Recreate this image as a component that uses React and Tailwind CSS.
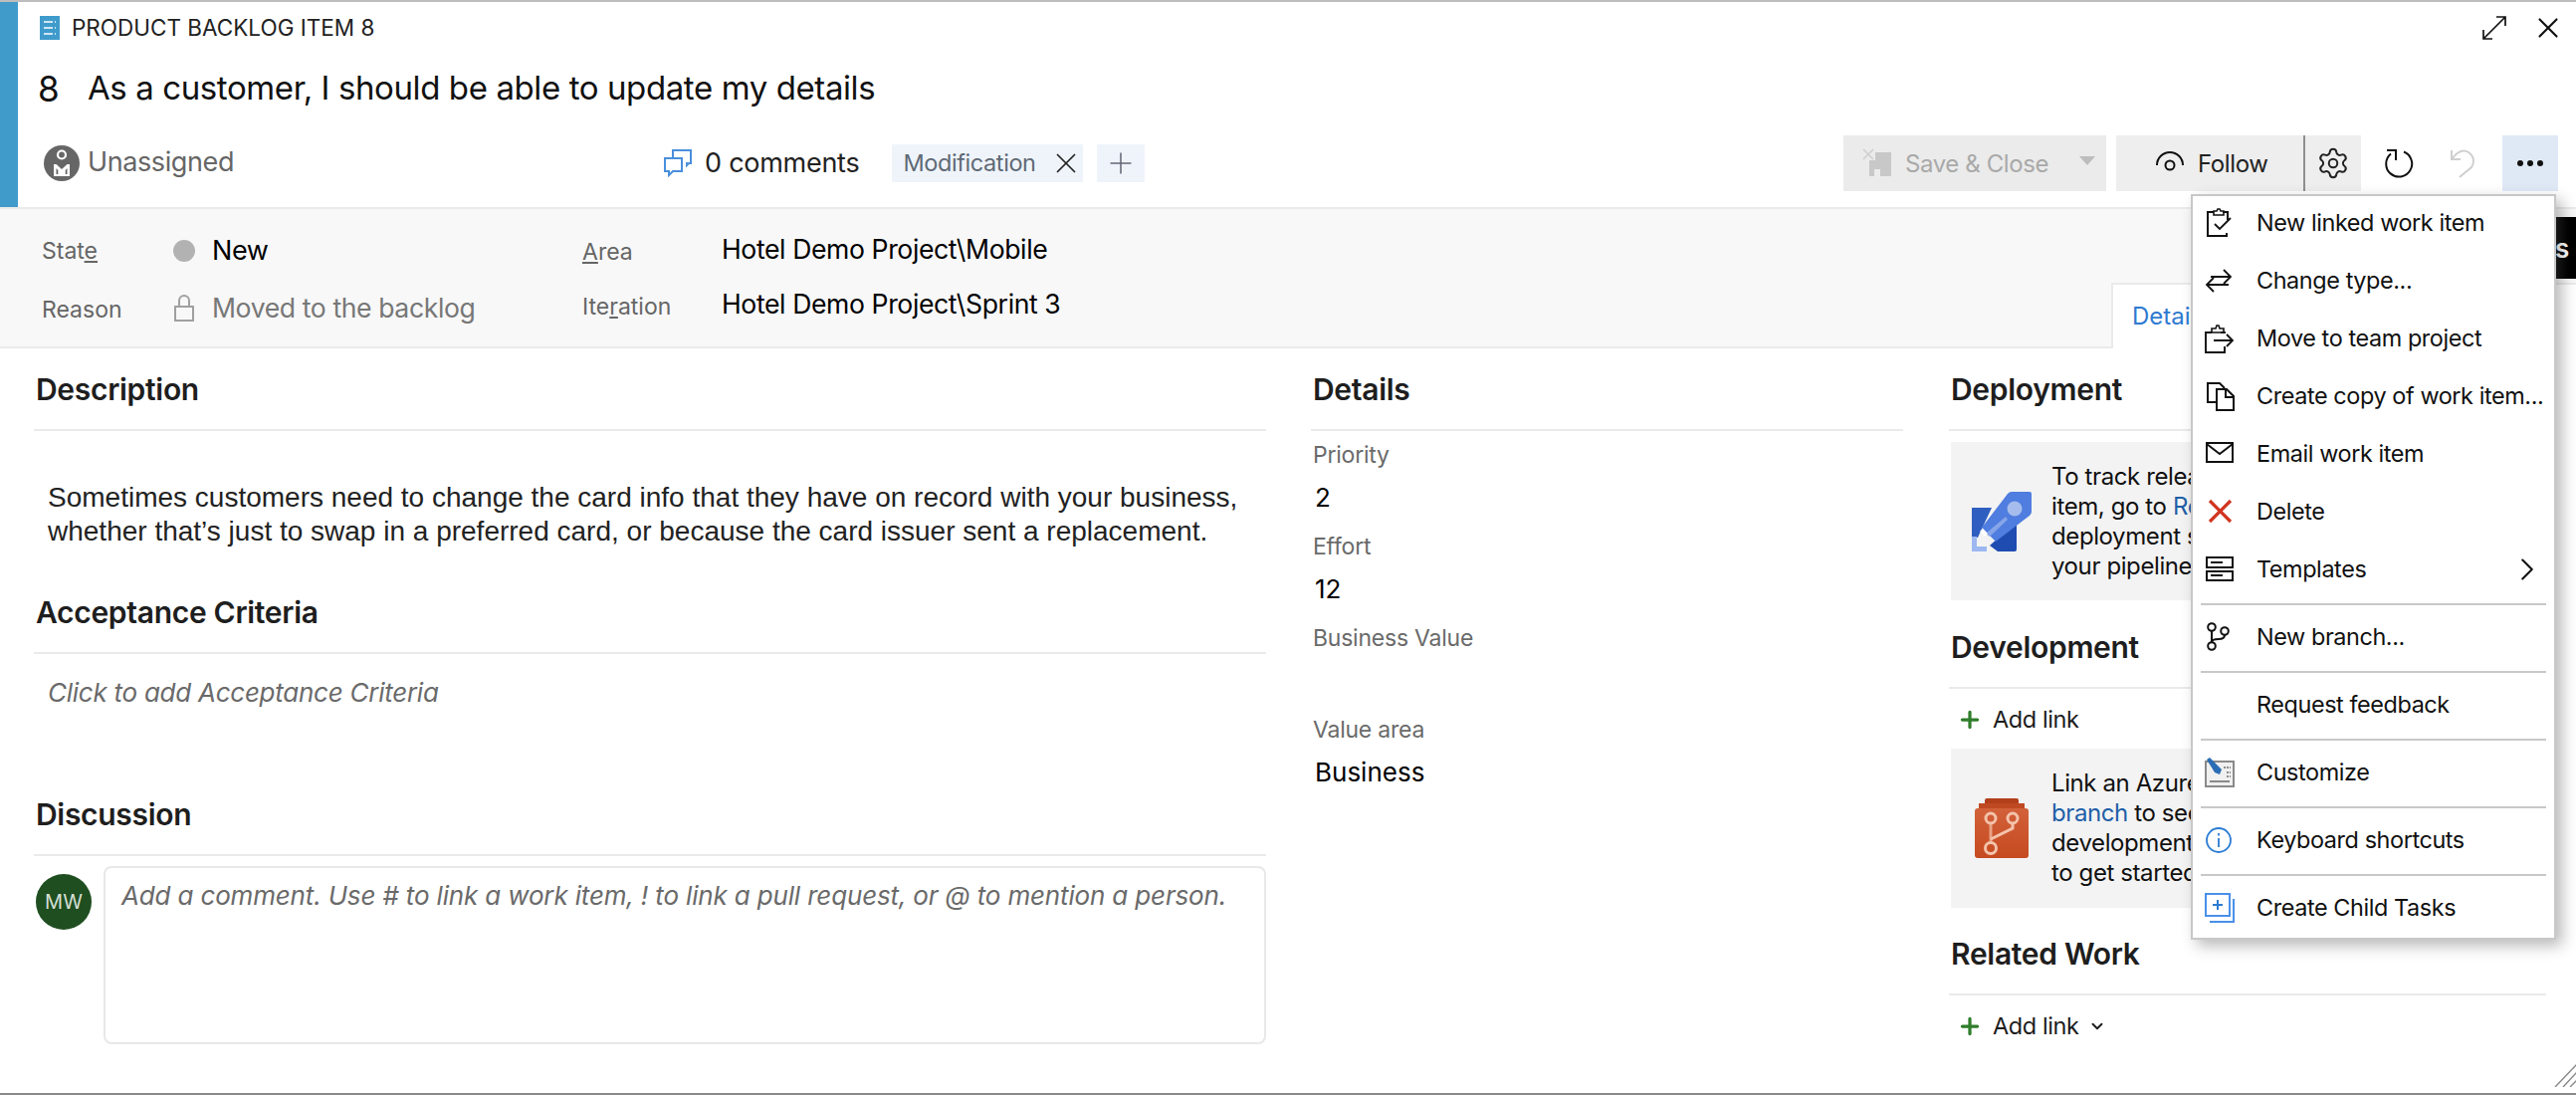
import { Settings, X, Plus, ChevronRight, ChevronDown } from "lucide-react";

const menuGroups = [
  [
    { label: "New linked work item", icon: <LinkedIcon /> },
    { label: "Change type...", icon: <SwapIcon /> },
    { label: "Move to team project", icon: <MoveIcon /> },
    { label: "Create copy of work item...", icon: <CopyIcon /> },
    { label: "Email work item", icon: <MailIcon /> },
    { label: "Delete", icon: <DeleteIcon /> },
    { label: "Templates", icon: <TemplateIcon />, more: true },
  ],
  [{ label: "New branch...", icon: <BranchIcon /> }],
  [{ label: "Request feedback", icon: null }],
  [{ label: "Customize", icon: <CustomizeIcon /> }],
  [{ label: "Keyboard shortcuts", icon: <InfoIcon /> }],
  [{ label: "Create Child Tasks", icon: <ChildIcon /> }],
];

function LinkedIcon() {
  return (
    <svg width="30" height="30" viewBox="0 0 30 30" fill="none" stroke="#111" strokeWidth="2">
      <path d="M23 12V4h-5M9 4H3v24h19v-3" />
      <path d="M9 7V3h3l1-2h2l1 2h3v4z" strokeWidth="1.6" />
      <path d="M10 16l5 5 11-11" strokeWidth="1.8" />
    </svg>
  );
}

function SwapIcon() {
  return (
    <svg width="30" height="30" viewBox="0 0 30 30" fill="none" stroke="#111" strokeWidth="1.8">
      <path d="M6 11h20M19 4l7 7-7 7" />
      <path d="M24 19H2M9 12l-7 7 7 7" />
    </svg>
  );
}

function MoveIcon() {
  return (
    <svg width="30" height="30" viewBox="0 0 30 30" fill="none" stroke="#111" strokeWidth="1.9">
      <path d="M20 10v-1h-4M7 9H1v20h19v-6" />
      <path d="M7 9V5h4l1-3h2l1 3h4v4z" strokeWidth="1.6" />
      <path d="M9 17h19M22 11l6 6-6 6" strokeWidth="1.8" />
    </svg>
  );
}

function CopyIcon() {
  return (
    <svg width="30" height="30" viewBox="0 0 30 30" fill="none" stroke="#111" strokeWidth="2">
      <path d="M12 21H3V2h12l5 5" />
      <path d="M12 8h10l7 7v14H12z" />
      <path d="M21 8v8h8" />
    </svg>
  );
}

function MailIcon() {
  return (
    <svg width="30" height="30" viewBox="0 0 30 30" fill="none" stroke="#111" strokeWidth="2">
      <path d="M2 4h26v19H2z" />
      <path d="M2 5l13 10L28 5" />
    </svg>
  );
}

function DeleteIcon() {
  return (
    <svg width="30" height="30" viewBox="0 0 30 30" fill="none" stroke="#d1341f" strokeWidth="3.2">
      <path d="M5 4l21 21M26 4L5 25" />
    </svg>
  );
}

function TemplateIcon() {
  return (
    <svg width="30" height="30" viewBox="0 0 30 30" fill="none" stroke="#111" strokeWidth="2">
      <path d="M2 3h26v10H2zM2 17h26v9H2z" />
      <path d="M6 8h12M6 21h12" />
    </svg>
  );
}

function BranchIcon() {
  return (
    <svg width="30" height="30" viewBox="0 0 30 30" fill="none" stroke="#111" strokeWidth="2">
      <circle cx="7" cy="5" r="3.8" />
      <circle cx="7" cy="24" r="3.8" />
      <circle cx="20" cy="9" r="3.8" />
      <path d="M7 9v11M20 13c0 3-3 4-6 4-4 0-7 1-7 3" />
    </svg>
  );
}

function CustomizeIcon() {
  return (
    <svg width="30" height="30" viewBox="0 0 30 30" fill="none">
      <path d="M1 4h28v25H1z" fill="#f0f0f0" stroke="#8a8a8a" strokeWidth="2" />
      <path d="M5 24h20" stroke="#8a8a8a" strokeWidth="2" />
      <path d="M19 10h7M22 15h4M22 19h4" stroke="#8a8a8a" strokeWidth="2" strokeDasharray="2 1" />
      <path d="M2 2l3-2 12 12-2 5-5-2z" fill="#2a6db5" />
    </svg>
  );
}

function InfoIcon() {
  return (
    <svg width="28" height="28" viewBox="0 0 28 28" fill="none" stroke="#2b7cd3" strokeWidth="1.8">
      <circle cx="14" cy="14" r="12" />
      <path d="M14 12v9M14 7v2.4" />
    </svg>
  );
}

function ChildIcon() {
  return (
    <svg width="30" height="30" viewBox="0 0 30 30" fill="none" stroke="#4a90ea" strokeWidth="2">
      <path d="M1 1h24v22H1z" />
      <path d="M29 6v23H5" />
      <path d="M13 7v10M8 12h10" stroke="#2b7cd3" />
    </svg>
  );
}

function ExpandIcon() {
  return (
    <svg width="26" height="26" viewBox="0 0 26 26" fill="none" stroke="#111" strokeWidth="1.7">
      <path d="M2 24L24 2M15 2h9v9M2 15v9h9" />
    </svg>
  );
}

function BacklogIcon() {
  return (
    <svg width="20" height="24" viewBox="0 0 20 24">
      <rect width="20" height="24" fill="#3f9bcc" />
      <path d="M4 6h9M15 6h1M4 12h9M15 12h1M4 18h9M15 18h1" stroke="#fff" strokeWidth="1.6" />
    </svg>
  );
}

function AssigneeIcon() {
  return (
    <svg width="36" height="36" viewBox="0 0 36 36">
      <circle cx="18" cy="18" r="18" fill="#666" />
      <circle cx="18" cy="9.5" r="4" fill="none" stroke="#fff" strokeWidth="2.2" />
      <path d="M10 19h16v12H10z" fill="#fff" />
      <path d="M12.5 19L18 24l5.5-5zM12.5 23v6h1.8v-4zM23.5 23v6h-1.8v-4z" fill="#666" />
    </svg>
  );
}

function CommentIcon() {
  return (
    <svg width="28" height="28" viewBox="0 0 28 28" fill="none" stroke="#4a8fdc" strokeWidth="2">
      <path d="M9 8V1h18v13h-2l-2 2v-3" />
      <path d="M1 9h17v13H9l-4 4v-4H1z" />
    </svg>
  );
}

function SaveIcon() {
  return (
    <svg width="30" height="30" viewBox="0 0 30 30">
      <path d="M13 4h16v24H18v-7h-6v7H7V12h6z" fill="#c8c8c8" />
      <path d="M1 1l10 10M11 1L1 11" stroke="#cfcfcf" strokeWidth="1.6" />
    </svg>
  );
}

function EyeIcon() {
  return (
    <svg width="30" height="24" viewBox="0 0 30 24" fill="none" stroke="#111" strokeWidth="2">
      <path d="M2 14a13 13 0 0 1 26 0" />
      <circle cx="15" cy="14" r="4.5" />
    </svg>
  );
}

function RefreshIcon() {
  return (
    <svg width="30" height="32" viewBox="0 0 30 32" fill="none" stroke="#111" strokeWidth="2">
      <path d="M20 4.5a13 13 0 1 1-13 2" />
      <path d="M3 3h9v10" />
    </svg>
  );
}

function UndoIcon() {
  return (
    <svg width="26" height="32" viewBox="0 0 26 32" fill="none" stroke="#cfcfcf" strokeWidth="2">
      <path d="M2 12C8 4 14 2 19 5c6 4 6 11 3 15L10 30" />
      <path d="M2 3v9h9" />
    </svg>
  );
}

function RocketIcon() {
  return (
    <svg width="60" height="60" viewBox="0 0 60 60">
      <path d="M0 16h20L6 46H0z" fill="#2e5fc0" />
      <path d="M45 30v28a2 2 0 0 1-2 2H26l-8-6z" fill="#1e4cb0" />
      <path d="M10 36L36 2a5 5 0 0 1 4-2h18a2 2 0 0 1 2 2v18a5 5 0 0 1-2 4L24 50z" fill="#4f7de0" />
      <circle cx="43" cy="17" r="7.5" fill="#a5bcec" />
      <path d="M14 42l20-17 2 3-18 17z" fill="#86a5e8" />
      <path d="M11 37l5 5-3 3-5-5z" fill="#fff" />
      <path d="M0 45h5v10h10v5H0z" fill="#9db8f0" />
    </svg>
  );
}

function RepoIcon() {
  return (
    <svg width="54" height="60" viewBox="0 0 54 60">
      <defs>
        <linearGradient id="repoBody" x1="0" y1="0" x2="0" y2="1">
          <stop offset="0" stopColor="#d2613a" />
          <stop offset="1" stopColor="#c64a20" />
        </linearGradient>
      </defs>
      <path d="M10 2a2 2 0 0 1 2-2h30a2 2 0 0 1 2 2v4H10z" fill="#b23f1a" />
      <rect x="4" y="5" width="46" height="6" fill="#bf4a22" />
      <rect y="10" width="54" height="50" rx="3" fill="url(#repoBody)" />
      <g fill="none" stroke="#f4c3ab" strokeWidth="3">
        <circle cx="16" cy="20" r="5" />
        <circle cx="38" cy="20" r="5" />
        <circle cx="16" cy="50" r="5.5" />
        <path d="M16 25v20" strokeOpacity="0.7" />
        <path d="M38 25v5L16 41" />
      </g>
    </svg>
  );
}

function Heading({ className = "", children }) {
  return (
    <div className={`border-b-2 border-[#eaeaea] pb-[21px] pl-[2px] text-[30px] font-semibold leading-[38px] tracking-[-0.01em] text-[#1e1e1e] ${className}`}>
      {children}
    </div>
  );
}

function Field({ label, value }) {
  return (
    <div className="h-[92px]">
      <div className="text-[23px] leading-[30px] tracking-[-0.01em] text-[#6a6a6a]">{label}</div>
      {value && <div className="mt-[11px] pl-[2px] text-[26px] leading-[34px] tracking-normal text-black">{value}</div>}
    </div>
  );
}

function AddLink({ className = "", chevron }) {
  return (
    <div className={`flex items-center pl-[8px] text-[23.5px] leading-[34px] text-[#1c1c1c] ${className}`}>
      <Plus size={26} strokeWidth={3} className="text-[#2f7d2b]" />
      <span className="ml-[10px]">Add link</span>
      {chevron && <ChevronDown size={18} strokeWidth={2.5} className="ml-[9px]" />}
    </div>
  );
}

function InfoBox({ className = "", icon, lines }) {
  return (
    <div className={`ml-[2px] flex h-[159px] items-center bg-[#f3f3f3] ${className}`}>
      <div className="flex w-[101px] shrink-0 justify-center pl-[9px] pr-[9px]">{icon}</div>
      <div className="whitespace-nowrap text-[24px] leading-[30px] text-[#111]">{lines}</div>
    </div>
  );
}

function Menu() {
  return (
    <div className="absolute left-[2201px] top-[193px] w-[367px] border-2 border-[#c8c8c8] bg-white pb-[1px] text-[23.4px] text-[#111] shadow-[6px_6px_14px_rgba(0,0,0,0.28)]">
      {menuGroups.map((group, i) => (
        <div key={i} className={i > 0 ? "mx-[8px] mt-[5px] border-t-2 border-[#c8c8c8] pt-[3px]" : "-mt-[2px]"}>
          {group.map((item) => (
            <div key={item.label} className={`flex h-[58px] items-center ${i > 0 ? "-mx-[8px]" : ""}`}>
              <div className="w-[64px] shrink-0 pl-[12px]">{item.icon}</div>
              <span className="whitespace-nowrap">{item.label}</span>
              {item.more && <ChevronRight size={38} strokeWidth={1.3} className="ml-auto mr-[8px]" />}
            </div>
          ))}
        </div>
      ))}
    </div>
  );
}

export default function App() {
  return (
    <div className="relative flex h-[1100px] w-[2588px] flex-col overflow-hidden border-b-2 border-t-2 border-b-[#8a8a8a] border-t-[#bdbdbd] bg-white font-['Inter',sans-serif] tracking-tight">
      {/* header */}
      <div className="flex h-[208px] shrink-0 border-b-2 border-[#eaeaea]">
        <div className="w-[18px] shrink-0 bg-[#409bcb]" />
        <div className="flex min-w-0 flex-1 flex-col">
          <div className="flex h-[52px] items-center pl-[22px] pr-[11px]">
            <BacklogIcon />
            <span className="ml-[12px] text-[22.5px] tracking-normal text-[#222]">PRODUCT BACKLOG ITEM 8</span>
            <div className="ml-auto flex items-center gap-[24px]">
              <ExpandIcon />
              <X size={34} strokeWidth={1.5} className="text-[#111]" />
            </div>
          </div>
          <div className="flex h-[68px] items-center pl-[20px] pt-[2px] text-[33px] text-[#111]">
            <span className="w-[50px] text-[35px]">8</span>
            <span>As a customer, I should be able to update my details</span>
          </div>
          <div className="mt-[14px] flex h-[56px] items-center pl-[26px] pr-[18px]">
            <AssigneeIcon />
            <span className="mb-[2px] ml-[8px] text-[27px] text-[#666]">Unassigned</span>
            <div className="ml-[432px]"><CommentIcon /></div>
            <span className="ml-[13px] text-[27px] tracking-[-0.01em] text-[#222]">0 comments</span>
            <div className="ml-[33px] flex h-[38px] w-[192px] items-center bg-[#eff4fb] pl-[11px] text-[23.5px] text-[#5f6a75]">
              Modification
              <X size={34} strokeWidth={1.2} className="ml-[13px] text-[#222]" />
            </div>
            <div className="ml-[14px] flex h-[38px] w-[48px] items-center justify-center bg-[#eff4fb]">
              <Plus size={34} strokeWidth={1.1} className="text-[#667]" />
            </div>
            <div className="ml-auto flex items-center">
              <div className="flex h-[56px] w-[264px] items-center whitespace-nowrap bg-[#ebebeb] pl-[19px] text-[24px] text-[#a9a9a9]">
                <SaveIcon />
                <span className="ml-[13px] mt-[1px]">Save &amp; Close</span>
                <span className="ml-[31px] mb-[6px] h-0 w-0 border-x-[8px] border-t-[9px] border-x-transparent border-t-[#bdbdbd]" />
              </div>
              <div className="ml-[10px] flex h-[56px] w-[190px] items-center border-r-2 border-[#8f8f8f] bg-[#eeeeee] pl-[39px] text-[24px] text-[#222]">
                <EyeIcon />
                <span className="ml-[13px] mt-[1px]">Follow</span>
              </div>
              <div className="flex h-[56px] w-[56px] items-center justify-center bg-[#eeeeee]">
                <Settings size={34} strokeWidth={1.4} className="text-[#222]" />
              </div>
              <div className="ml-[23px]"><RefreshIcon /></div>
              <div className="ml-[36px]"><UndoIcon /></div>
              <div className="ml-[27px] flex h-[56px] w-[56px] items-center justify-center gap-[4px] bg-[#dfe9f6]">
                <span className="h-[6px] w-[6px] rounded-full bg-[#111]" />
                <span className="h-[6px] w-[6px] rounded-full bg-[#111]" />
                <span className="h-[6px] w-[6px] rounded-full bg-[#111]" />
              </div>
            </div>
          </div>
        </div>
      </div>

      {/* state / area bar */}
      <div className="flex h-[140px] shrink-0 border-b-2 border-[#eaeaea] bg-[#f8f8f8] pl-[42px]">
        <div className="flex flex-col pt-[24px]">
          <div className="flex h-[36px] items-center">
            <span className="w-[132px] text-[23px] tracking-normal text-[#666]">Stat<u>e</u></span>
            <span className="h-[22px] w-[22px] rounded-full bg-[#b2b2b2]" />
            <span className="ml-[17px] text-[27px] text-black">New</span>
          </div>
          <div className="mt-[22px] flex h-[36px] items-center">
            <span className="mt-[2px] w-[132px] text-[23px] tracking-normal text-[#666]">Reason</span>
            <svg width="22" height="28" viewBox="0 0 22 28" fill="none" stroke="#a0a0a0" strokeWidth="2">
              <path d="M2 12h18v14H2zM6 12V6a5 5 0 0 1 10 0v6" />
            </svg>
            <span className="ml-[17px] text-[26.6px] text-[#777]">Moved to the backlog</span>
          </div>
        </div>
        <div className="absolute left-[585px] flex flex-col pt-[23px]">
          <div className="flex h-[36px] items-center">
            <span className="mt-[5px] w-[140px] text-[23px] tracking-normal text-[#666]"><u>A</u>rea</span>
            <span className="text-[26.6px] text-black">Hotel Demo Project\Mobile</span>
          </div>
          <div className="mt-[19px] flex h-[36px] items-center">
            <span className="mt-[5px] w-[140px] text-[23px] tracking-normal text-[#666]">Ite<u>r</u>ation</span>
            <span className="text-[26.6px] text-black">Hotel Demo Project\Sprint 3</span>
          </div>
        </div>
        <div className="-mb-[2px] ml-auto flex h-[66px] w-[467px] items-center self-end border-l-2 border-t-2 border-[#eaeaea] bg-white pl-[19px] text-[24px] tracking-normal text-[#2e7ad1]">
          Details
        </div>
      </div>

      {/* body */}
      <div className="flex min-h-0 flex-1 pl-[34px]">
        <div className="w-[1238px] shrink-0 pt-[22px]">
          <Heading>Description</Heading>
          <p className="mt-[50px] whitespace-nowrap pl-[14px] font-['Liberation_Sans',sans-serif] text-[28px] leading-[34px] tracking-normal text-[#222]">
            Sometimes customers need to change the card info that they have on record with your business,
            <br />
            whether that’s just to swap in a preferred card, or because the card issuer sent a replacement.
          </p>
          <Heading className="mt-[45px]">Acceptance Criteria</Heading>
          <div className="mt-[22px] pl-[14px] text-[26px] italic leading-[34px] tracking-[-0.01em] text-[#6a6a6a]">Click to add Acceptance Criteria</div>
          <Heading className="mt-[86px]">Discussion</Heading>
          <div className="mt-[10px] flex gap-[12px] pl-[2px]">
            <div className="mt-[8px] flex h-[56px] w-[56px] shrink-0 items-center justify-center rounded-full bg-[#1f4e20] text-[20px] tracking-normal text-[#d5dfd5]">MW</div>
            <div className="h-[179px] flex-1 rounded-[8px] border-2 border-[#e8e8e8] pl-[16px] pt-[10px] text-[26px] italic leading-[36px] tracking-[-0.16px] text-[#6a6a6a]">
              Add a comment. Use # to link a work item, ! to link a pull request, or @ to mention a person.
            </div>
          </div>
        </div>

        <div className="ml-[47px] w-[593px] shrink-0 pt-[22px]">
          <Heading className="-ml-[2px]">Details</Heading>
          <div className="mt-[9px]">
            <Field label="Priority" value="2" />
            <Field label="Effort" value="12" />
            <Field label="Business Value" />
            <Field label="Value area" value="Business" />
          </div>
        </div>

        <div className="ml-[46px] w-[600px] shrink-0 pt-[22px]">
          <Heading>Deployment</Heading>
          <InfoBox
            className="mt-[11px]"
            icon={<RocketIcon />}
            lines={
              <>
                <div>To track releases associated</div>
                <div>item, go to <span className="text-[#1f5fa8]">Releases</span> and turn on</div>
                <div>deployment status reporting</div>
                <div>your pipeline's settings.</div>
              </>
            }
          />
          <Heading className="mt-[28px]">Development</Heading>
          <AddLink className="mt-[14px]" />
          <InfoBox
            className="mt-[12px] h-[160px]"
            icon={<RepoIcon />}
            lines={
              <>
                <div>Link an Azure Repos commit or</div>
                <div><span className="text-[#1f5fa8]">branch</span> to see the status of your</div>
                <div>development. Create a branch</div>
                <div>to get started.</div>
              </>
            }
          />
          <Heading className="mt-[27px]">Related Work</Heading>
          <AddLink className="mt-[14px]" chevron />
        </div>
      </div>

      {/* overlays */}
      <div className="absolute left-[2567px] top-[216px] flex h-[62px] w-[21px] items-center bg-gradient-to-r from-[#222] to-black text-[26px] font-semibold text-white">s</div>
      <Menu />
      <svg className="absolute bottom-[6px] right-0" width="22" height="24" viewBox="0 0 22 24" stroke="#888" strokeWidth="1.4">
        <path d="M1 24L23 1M9 24L23 9M16 24l7-7" />
      </svg>
    </div>
  );
}
